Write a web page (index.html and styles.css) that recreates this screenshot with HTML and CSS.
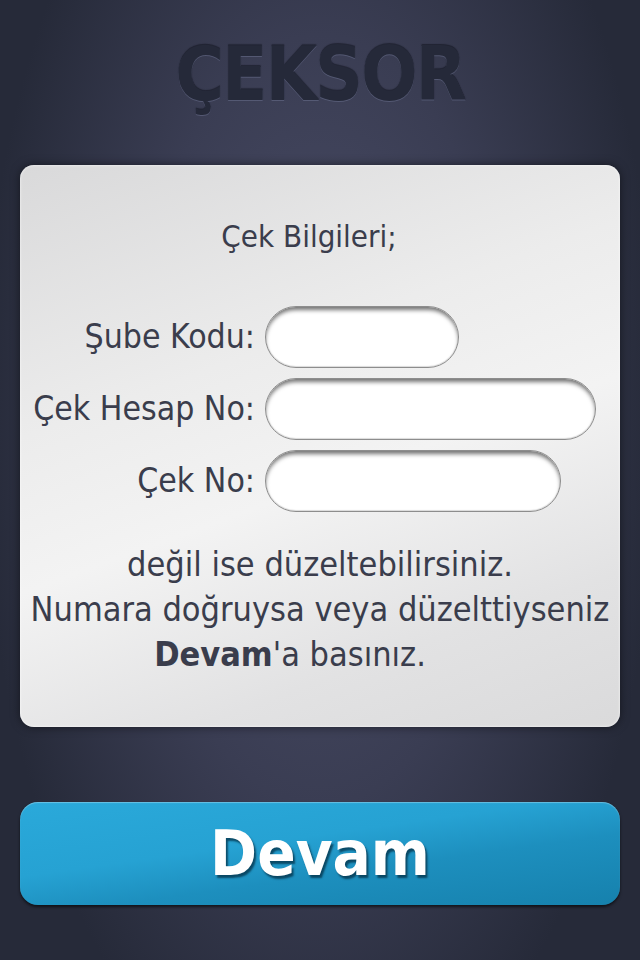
FILE: index.html
```html
<!DOCTYPE html>
<html lang="tr">
<head>
<meta charset="utf-8">
<title>ÇEKSOR</title>
<link rel="stylesheet" href="styles.css">
</head>
<body>
<div class="screen">
  <header class="header">
    <h1 class="logo">ÇEKSOR</h1>
  </header>
  <main class="card">
    <p class="card-title">Çek Bilgileri;</p>
    <div class="form">
      <label class="label">Şube Kodu:</label>
      <div class="field field-short"></div>
      <label class="label">Çek Hesap No:</label>
      <div class="field field-long"></div>
      <label class="label">Çek No:</label>
      <div class="field field-mid"></div>
    </div>
    <p class="note">
      <span class="line">değil ise düzeltebilirsiniz.</span>
      <span class="line">Numara doğruysa veya düzelttiyseniz</span>
      <span class="line line-last"><b>Devam</b>'a basınız.</span>
    </p>
  </main>
  <button class="btn">Devam</button>
</div>
</body>
</html>
```
FILE: styles.css
```css
html, body {
  margin: 0;
  padding: 0;
}
body {
  width: 640px;
  height: 960px;
  overflow: hidden;
  background: radial-gradient(ellipse 340px 700px at 320px 420px, #4b4e68 0%, #3a3d53 55%, #262a39 100%);
  font-family: "DejaVu Sans Condensed", "DejaVu Sans", sans-serif;
  font-stretch: condensed;
}
.screen {
  display: flex;
  flex-direction: column;
  align-items: center;
  padding: 0 20px;
}
.header {
  height: 165px;
  width: 100%;
  display: flex;
  justify-content: center;
}
.logo {
  margin: 31px 0 0;
  font-size: 74px;
  line-height: 86px;
  font-weight: bold;
  color: #252939;
  letter-spacing: -2px;
  text-shadow: 0 1px 0 rgba(110,115,145,0.5), 0 -1px 1px rgba(10,12,20,0.5);
}
.card {
  box-sizing: border-box;
  width: 600px;
  height: 562px;
  border-radius: 14px;
  background: linear-gradient(160deg, #d9d9da 0%, #ececec 35%, #f3f3f3 55%, #e2e2e3 80%, #dadadb 100%);
  box-shadow: 0 0 10px rgba(0,0,0,0.5), inset 0 0 3px rgba(255,255,255,0.8);
  padding-top: 51px;
  color: #3a3d4c;
}
.card-title {
  margin: 0;
  padding-right: 22px;
  text-align: center;
  font-size: 31px;
  line-height: 40px;
}
.form {
  margin-top: 50px;
  display: grid;
  grid-template-columns: 235px auto;
  column-gap: 10px;
  row-gap: 10px;
  align-items: center;
  justify-items: start;
}
.label {
  justify-self: end;
  font-size: 33.5px;
  line-height: 62px;
}
.field {
  box-sizing: border-box;
  height: 62px;
  border-radius: 31px;
  background: #fff;
  border: 1px solid #8d8d8d;
  box-shadow: inset 0 4px 4px -1px rgba(0,0,0,0.55), inset 0 -1px 1px rgba(0,0,0,0.15);
}
.field-short { width: 194px; }
.field-long { width: 331px; }
.field-mid { width: 296px; }
.note {
  margin: 30px 0 0;
  text-align: center;
  font-size: 34px;
  line-height: 45px;
}
.line {
  display: block;
}
.line-last {
  padding-right: 60px;
}
.note b {
  font-weight: bold;
}
.btn {
  margin-top: 75px;
  width: 600px;
  height: 103px;
  border: none;
  border-radius: 18px;
  background: linear-gradient(172deg, #2aa9da 0%, #26a2d3 40%, #1d8fbe 62%, #1681ad 100%);
  box-shadow: 0 2px 3px rgba(0,0,0,0.6), inset 0 1px 1px rgba(255,255,255,0.3);
  color: #fff;
  font-family: "DejaVu Sans Condensed", "DejaVu Sans", sans-serif;
  font-stretch: condensed;
  font-weight: bold;
  font-size: 63px;
  line-height: 103px;
  padding: 0;
  text-shadow: 2px 3px 2px rgba(0,40,60,0.7);
}
```
